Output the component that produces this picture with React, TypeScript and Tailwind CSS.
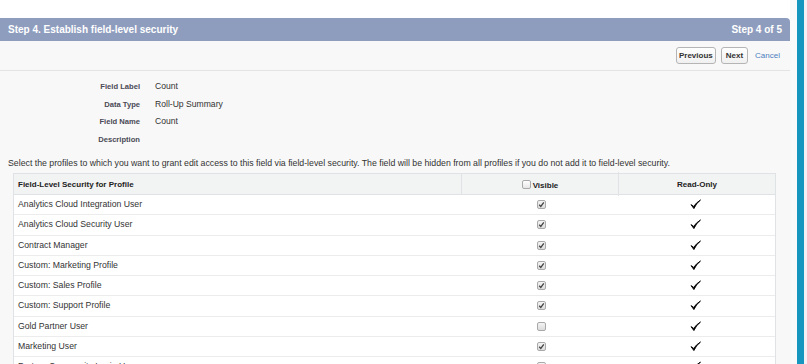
import React from "react";

const rows: { name: string; visible: boolean }[] = [
  { name: "Analytics Cloud Integration User", visible: true },
  { name: "Analytics Cloud Security User", visible: true },
  { name: "Contract Manager", visible: true },
  { name: "Custom: Marketing Profile", visible: true },
  { name: "Custom: Sales Profile", visible: true },
  { name: "Custom: Support Profile", visible: true },
  { name: "Gold Partner User", visible: false },
  { name: "Marketing User", visible: true },
  { name: "Partner Community Login User", visible: false },
];

function Box({ checked }: { checked: boolean }) {
  return (
    <span className="inline-flex h-[9px] w-[9px] items-center justify-center rounded-[2px] border border-[#a9a9a9] bg-gradient-to-b from-[#f4f4f4] to-[#dcdcdc]">
      {checked && (
        <svg width="7" height="7" viewBox="0 0 7 7">
          <path d="M1.2 3.8 L2.8 5.4 L5.8 1.4" fill="none" stroke="#444" strokeWidth="1.3" />
        </svg>
      )}
    </span>
  );
}

function Tick() {
  return (
    <svg width="11" height="11" viewBox="0 0 11 11">
      <path d="M1 5.6 L3.9 9.6 Q6 4.5 10.5 1 Q6.2 3.6 3.7 7.4 Z" fill="#000" stroke="#000" strokeWidth="0.9" strokeLinejoin="round" />
    </svg>
  );
}

export default function App() {
  return (
    <div className="h-[364px] w-[807px] overflow-hidden bg-white text-[#333] [font-family:'Liberation_Sans',Arial,sans-serif]">
      <div className="flex h-full">
        <div className="w-[790px] pt-[18px]">
          <div className="flex h-[23px] items-center justify-between rounded-tr-[4px] bg-[#8e9dbe] pl-[8px] pr-[8px] text-[10px] font-bold text-white">
            <span>Step 4. Establish field-level security</span>
            <span>Step 4 of 5</span>
          </div>
          <div className="h-[400px] bg-[#f8f8f8]">
            <div className="flex h-[30px] items-center justify-end gap-[5px] border-b border-[#e4e4e4] pr-[10px]">
              <button className="h-[17px] rounded-[3px] border border-[#b5b5b5] bg-gradient-to-b from-white to-[#f0f0f0] px-[2px] text-[8px] font-bold leading-none text-[#333]">
                Previous
              </button>
              <button className="h-[17px] rounded-[3px] border border-[#b5b5b5] bg-gradient-to-b from-white to-[#f0f0f0] px-[4px] text-[8px] font-bold leading-none text-[#333]">
                Next
              </button>
              <span className="ml-[2px] text-[8px] text-[#4a7fc0]">Cancel</span>
            </div>
            <div className="pt-[7px] text-[8.6px]">
              {[
                ["Field Label", "Count"],
                ["Data Type", "Roll-Up Summary"],
                ["Field Name", "Count"],
                ["Description", ""],
              ].map(([l, v]) => (
                <div key={l} className="flex h-[17.5px] items-center">
                  <span className="w-[140px] text-right text-[7.6px] font-bold text-[#4a4a56]">{l}</span>
                  <span className="pl-[15px] text-[#333]">{v}</span>
                </div>
              ))}
            </div>
            <div className="pl-[8px] pt-[9px] text-[8.75px] leading-[12px]">
              Select the profiles to which you want to grant edit access to this field via field-level security. The field will be hidden from all profiles if you do not add it to field-level security.
            </div>
            <div className="ml-[13px] mt-[4px] w-[763px] border border-[#e0e3e5] bg-white text-[8.7px]">
              <div className="flex h-[21px] items-center border-b border-[#e0e3e5] bg-[#f2f3f3] text-[8px] font-bold text-[#222]">
                <div className="w-[448px] border-r border-[#e0e3e5] pl-[4px] leading-[21px]">Field-Level Security for Profile</div>
                <div className="flex w-[157px] items-center justify-center gap-[2px] border-r border-[#e0e3e5] pt-[3px] leading-[21px]">
                  <span className="mb-[3px] inline-block h-[9px] w-[9px] rounded-[2px] border border-[#a9a9a9] bg-gradient-to-b from-white to-[#e6e6e6]" />
                  <span>Visible</span>
                </div>
                <div className="flex-1 text-center leading-[21px]">Read-Only</div>
              </div>
              {rows.map((r) => (
                <div key={r.name} className="flex h-[20.25px] items-center border-b border-[#ececec]">
                  <div className="w-[448px] pl-[4px] text-[#333]">{r.name}</div>
                  <div className="flex w-[157px] justify-center pl-[2px]">
                    <Box checked={r.visible} />
                  </div>
                  <div className="flex flex-1 justify-center pr-[4px]">
                    <Tick />
                  </div>
                </div>
              ))}
            </div>
          </div>
        </div>
        <div className="w-[7px] bg-[#fafafa]" />
        <div className="w-[7px] bg-[#1797c0]" />
        <div className="w-[3px] bg-[#f6f0f4]" />
      </div>
    </div>
  );
}
